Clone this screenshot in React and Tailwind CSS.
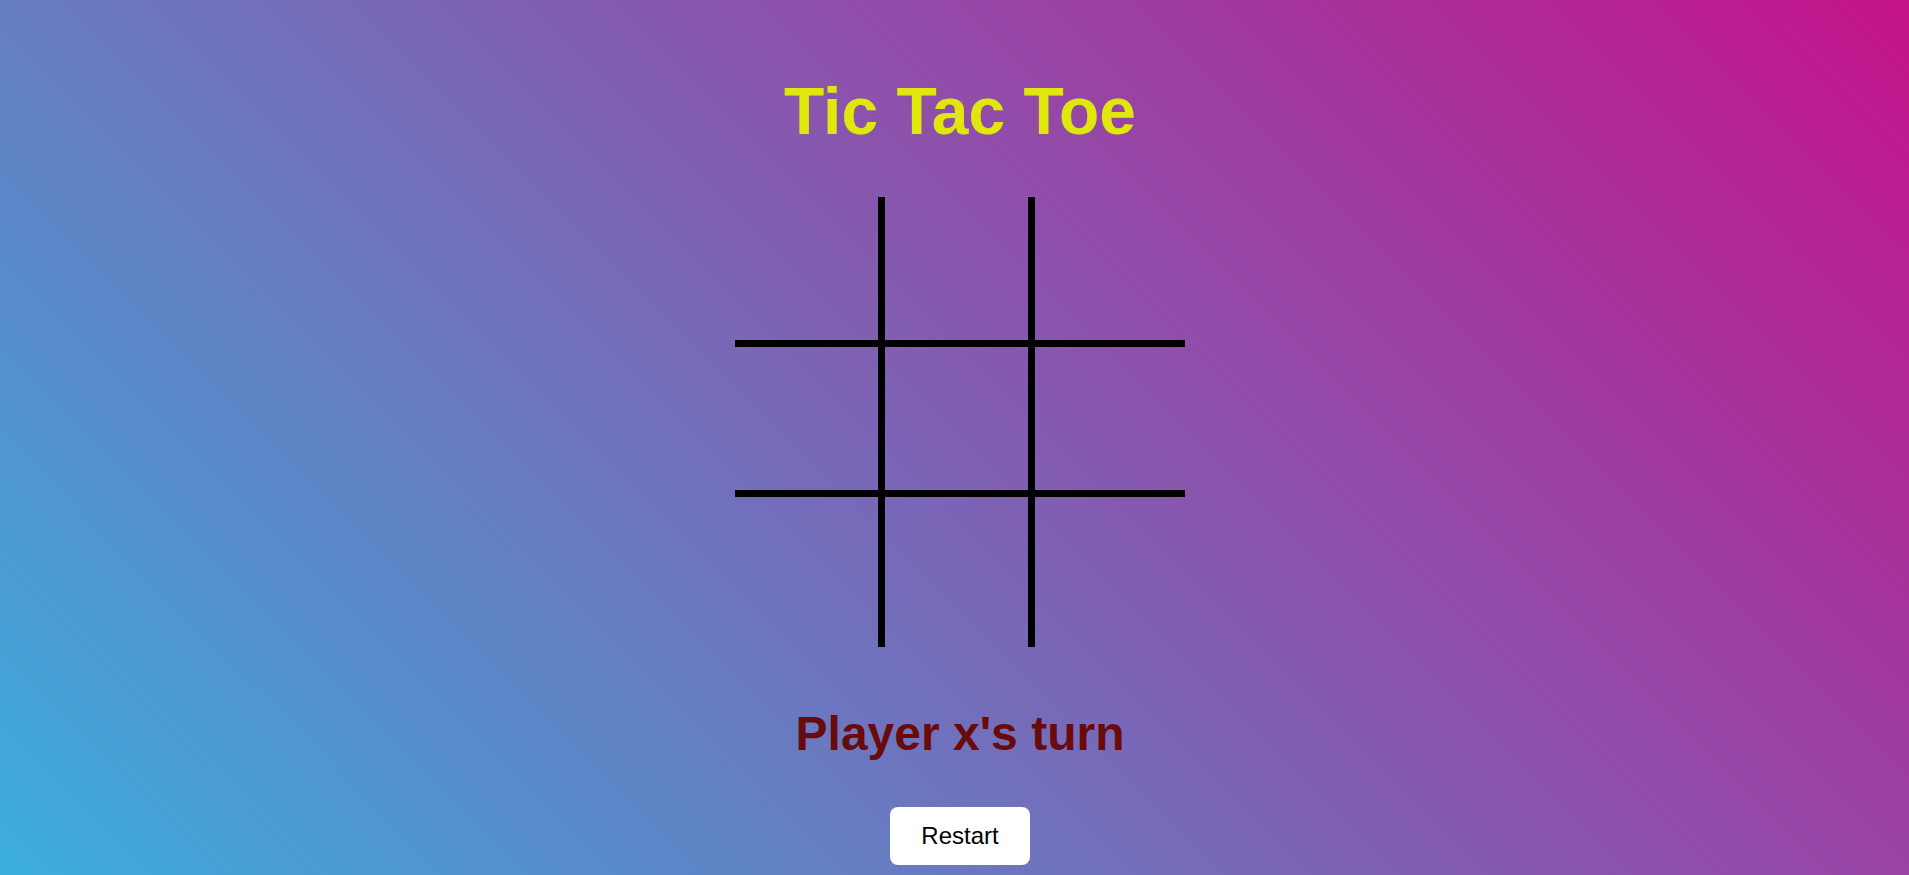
import React, { useState } from "react";

export default function App() {
  const [cells, setCells] = useState(Array(9).fill(""));
  const [player, setPlayer] = useState("x");

  const play = (i) => {
    if (cells[i]) return;
    const next = cells.slice();
    next[i] = player;
    setCells(next);
    setPlayer(player === "x" ? "o" : "x");
  };

  const restart = () => {
    setCells(Array(9).fill(""));
    setPlayer("x");
  };

  return (
    <div className="min-h-screen w-full overflow-hidden bg-[linear-gradient(45deg,#3aaedc,#c4128a)] flex flex-col items-center pt-[78px] pl-[11px] font-['Liberation_Sans',Arial,sans-serif]">
      <h1 className="text-[66px] leading-none font-bold text-[#e0e70b] m-0">Tic Tac Toe</h1>
      <div className="mt-[53px] grid grid-cols-[150px_150px_150px] grid-rows-[150px_150px_150px]">
        {cells.map((c, i) => {
          const col = i % 3;
          const row = Math.floor(i / 3);
          return (
            <div
              key={i}
              onClick={() => play(i)}
              className={
                "box-border border-black flex items-center justify-center text-[64px] font-bold cursor-pointer " +
                (col < 2 ? "border-r-[7px] " : "") +
                (row < 2 ? "border-b-[7px]" : "")
              }
            >
              {c}
            </div>
          );
        })}
      </div>
      <p className="mt-[63px] text-[48px] leading-none font-bold text-[#6a0b0b]">Player {player}'s turn</p>
      <button
        onClick={restart}
        className="mt-[49px] bg-white text-black text-[24px] leading-[28px] py-[15px] px-[31px] rounded-[8px] border-0 font-['Liberation_Sans',Arial,sans-serif]"
      >
        Restart
      </button>
    </div>
  );
}
